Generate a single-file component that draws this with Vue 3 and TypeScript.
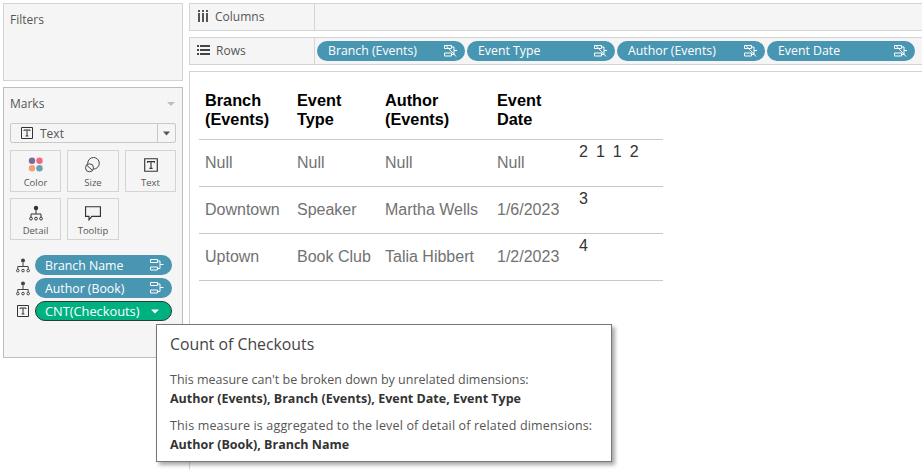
<script setup lang="ts">
const rowPills: string[] = ['Branch (Events)', 'Event Type', 'Author (Events)', 'Event Date']
const headers: string[][] = [['Branch', '(Events)'], ['Event', 'Type'], ['Author', '(Events)'], ['Event', 'Date']]
const rows = [
  { cells: ['Null', 'Null', 'Null', 'Null'], value: ['2', '1', '1', '2'] },
  { cells: ['Downtown', 'Speaker', 'Martha Wells', '1/6/2023'], value: ['3'] },
  { cells: ['Uptown', 'Book Club', 'Talia Hibbert', '1/2/2023'], value: ['4'] },
]
const markCards = ['Color', 'Size', 'Text', 'Detail', 'Tooltip']
</script>

<template>
  <div class="page">
    <aside class="side">
      <section class="filters"><h2 class="title">Filters</h2></section>
      <section class="marks">
        <header class="marks-head">
          <h2 class="title">Marks</h2>
          <svg class="caret" width="10" height="6" viewBox="0 0 10 6"><path d="M1 1h8L5 5z" fill="#bdbdbd" /></svg>
        </header>
        <div class="select">
          <div class="select-main">
            <svg class="t-icon" width="12" height="12" viewBox="0 0 12 12"><path d="M.5.5h11v11H.5z" fill="none" stroke="#333" /><path d="M3 4V3h6v1M6 3v6M4.600 9h2.800" fill="none" stroke="#333" /></svg>
            <span>Text</span>
          </div>
          <div class="select-arrow"><svg width="7" height="5" viewBox="0 0 7 5"><path d="M0 .5h7L3.500 4.500z" fill="#555" /></svg></div>
        </div>
        <div class="cards">
          <div v-for="c in markCards" :key="c" class="card">
            <svg v-if="c === 'Color'" width="20" height="16" viewBox="0 0 20 16">
              <circle cx="6" cy="3.800" r="3.200" fill="#7b6a9a" /><circle cx="13.500" cy="3.800" r="3.200" fill="#ef6a80" />
              <circle cx="6" cy="11.300" r="3.200" fill="#f2a273" /><circle cx="13.500" cy="11.300" r="3.200" fill="#6c9fb0" />
            </svg>
            <svg v-else-if="c === 'Size'" width="20" height="16" viewBox="0 0 20 16" fill="none" stroke="#444">
              <circle cx="10.500" cy="6.300" r="5.800" /><circle cx="6.500" cy="10.800" r="4" fill="#f5f5f5" /><path d="M4 8.500l5 4.500" />
            </svg>
            <svg v-else-if="c === 'Text'" width="20" height="16" viewBox="0 0 14 14" class="box14">
              <path d="M1.500 1.500h11v11h-11z" fill="none" stroke="#333" /><path d="M4 5V4h6v1M7 4v6M5.600 10h2.800" fill="none" stroke="#333" />
            </svg>
            <svg v-else-if="c === 'Detail'" width="20" height="16" viewBox="0 0 14 16">
              <circle cx="7" cy="3" r="2.200" fill="#333" /><path d="M7 5v4M2 12V9h10v3" fill="none" stroke="#333" />
              <circle cx="2" cy="13.600" r="1.400" fill="none" stroke="#333" /><circle cx="7" cy="13.600" r="1.400" fill="none" stroke="#333" /><circle cx="12" cy="13.600" r="1.400" fill="none" stroke="#333" />
            </svg>
            <svg v-else width="20" height="16" viewBox="0 0 16 14">
              <path d="M1.500 1.500h13v8.500H7L4.500 13V10h-3z" fill="none" stroke="#333" />
            </svg>
            <span>{{ c }}</span>
          </div>
        </div>
        <div class="mark-rows">
          <div class="mark-row">
            <svg class="mark-icon" width="14" height="15" viewBox="0 0 14 15"><circle cx="7" cy="2.400" r="2" fill="#444" /><path d="M7 4.500v4M1.800 11V8.500h10.400V11" fill="none" stroke="#444" /><circle cx="1.800" cy="12.600" r="1.300" fill="none" stroke="#444" /><circle cx="7" cy="12.600" r="1.300" fill="none" stroke="#444" /><circle cx="12.200" cy="12.600" r="1.300" fill="none" stroke="#444" /></svg>
            <div class="pill blue wide"><span>Branch Name</span>
              <svg width="14" height="12" viewBox="0 0 14 12" fill="none" stroke="#fff"><path d="M.5.500h7v3h-7zM.5 8h7v3h-7zM7.500 2h2.500v7.500H7.500M10 5.500h3.500" /></svg>
            </div>
          </div>
          <div class="mark-row">
            <svg class="mark-icon" width="14" height="15" viewBox="0 0 14 15"><circle cx="7" cy="2.400" r="2" fill="#444" /><path d="M7 4.500v4M1.800 11V8.500h10.400V11" fill="none" stroke="#444" /><circle cx="1.800" cy="12.600" r="1.300" fill="none" stroke="#444" /><circle cx="7" cy="12.600" r="1.300" fill="none" stroke="#444" /><circle cx="12.200" cy="12.600" r="1.300" fill="none" stroke="#444" /></svg>
            <div class="pill blue wide"><span>Author (Book)</span>
              <svg width="14" height="12" viewBox="0 0 14 12" fill="none" stroke="#fff"><path d="M.5.500h7v3h-7zM.5 8h7v3h-7zM7.500 2h2.500v7.500H7.500M10 5.500h3.500" /></svg>
            </div>
          </div>
          <div class="mark-row">
            <svg class="mark-icon" width="14" height="14" viewBox="0 0 14 14"><path d="M1.500 1.500h11v11h-11z" fill="none" stroke="#333" /><path d="M4 5V4h6v1M7 4v6M5.600 10h2.800" fill="none" stroke="#333" /></svg>
            <div class="pill green wide"><span>CNT(Checkouts)</span>
              <svg class="pill-caret" width="8" height="5" viewBox="0 0 8 5"><path d="M0 .5h8L4 4.500z" fill="#fff" /></svg>
            </div>
          </div>
        </div>
      </section>
    </aside>

    <main class="main">
      <div class="shelf">
        <div class="shelf-label">
          <svg width="12" height="12" viewBox="0 0 12 12" fill="#555"><rect x="1" y="3" width="2" height="9" /><rect x="5" y="3" width="2" height="9" /><rect x="9" y="3" width="2" height="9" /><rect x="1" y="0" width="2" height="2" /><rect x="5" y="0" width="2" height="2" /><rect x="9" y="0" width="2" height="2" /></svg>
          <span>Columns</span>
        </div>
        <div class="shelf-body"></div>
      </div>
      <div class="shelf">
        <div class="shelf-label">
          <svg width="13" height="10" viewBox="0 0 13 10" fill="#444"><rect x="0" y="0" width="2" height="2" /><rect x="3" y="0" width="10" height="2" /><rect x="0" y="4" width="2" height="2" /><rect x="3" y="4" width="10" height="2" /><rect x="0" y="8" width="2" height="2" /><rect x="3" y="8" width="10" height="2" /></svg>
          <span>Rows</span>
        </div>
        <div class="shelf-body pills">
          <div v-for="p in rowPills" :key="p" class="pill blue">
            <span>{{ p }}</span>
            <svg width="13" height="12" viewBox="0 0 13 12" fill="none" stroke="#fff"><path d="M.5.500h7v3h-7zM.5 8h7v3h-7zM7.500 2h2.500v7.500H7.500M10 5.500h3M1.500 0l10.500 11.500" /></svg>
          </div>
        </div>
      </div>
      <div class="view">
        <div class="table">
          <div class="tr head">
            <div v-for="(h, i) in headers" :key="i" class="th">{{ h[0] }}<br />{{ h[1] }}</div>
            <div class="th"></div>
          </div>
          <div v-for="(r, i) in rows" :key="i" class="tr">
            <div v-for="(c, j) in r.cells" :key="j" class="td">{{ c }}</div>
            <div class="num"><span v-for="(v, k) in r.value" :key="k">{{ v }}</span></div>
          </div>
        </div>
      </div>
    </main>

    <div class="tooltip">
      <h3>Count of Checkouts</h3>
      <p>This measure can't be broken down by unrelated dimensions:<br /><b>Author (Events), Branch (Events), Event Date, Event Type</b></p>
      <p><span class="wider">This measure is aggregated to the level of detail of related dimensions:</span><br /><b>Author (Book), Branch Name</b></p>
    </div>
  </div>
</template>

<style>
html, body { margin: 0; background: #fff; }
</style>

<style scoped>
.page {
  position: relative;
  width: 922px;
  height: 470px;
  overflow: hidden;
  display: flex;
  gap: 6px;
  padding: 3px 0 0 3px;
  box-sizing: border-box;
  background: #fff;
  font-family: "Open Sans", "Noto Sans", sans-serif;
  color: #555;
}
.side { width: 180px; display: flex; flex-direction: column; gap: 6px; flex: none; }
.filters {
  height: 78px; box-sizing: border-box; border: 1px solid #d4d4d4; background: #f5f5f5; padding: 9px 6px;
}
.title { margin: 0; font-size: 12px; line-height: 14px; font-weight: 400; color: #555; }
.marks {
  height: 271px; box-sizing: border-box; border: 1px solid #bdbdbd; background: #f5f5f5; padding: 8px 6px;
}
.marks-head { display: flex; justify-content: space-between; align-items: center; height: 16px; }
.select {
  margin-top: 11px; height: 20px; box-sizing: border-box; border: 1px solid #c8c8c8;
  border-radius: 2px; display: flex; width: 166px; font-size: 12px;
}
.select-main { flex: 1; display: flex; align-items: center; gap: 7px; padding-left: 10px; border-right: 1px solid #c8c8c8; }
.select-arrow { width: 17px; display: flex; align-items: center; justify-content: center; }
.cards { margin-top: 7px; display: grid; grid-template-columns: 51px 52px 51px; column-gap: 6px; row-gap: 6px; width: 166px; }
.card {
  height: 42px; box-sizing: border-box; border: 1px solid #d4d4d4; display: flex; flex-direction: column;
  align-items: center; padding-top: 6px; gap: 4px; font-size: 9.500px; line-height: 12px; color: #555;
}
.mark-rows { margin-top: 15px; display: flex; flex-direction: column; gap: 3px; }
.mark-row { display: flex; align-items: center; gap: 5px; padding-left: 6px; height: 20px; }
.mark-icon { flex: none; }
.pill {
  width: 148px; height: 20px; box-sizing: border-box; border-radius: 10px; display: flex; align-items: center;
  justify-content: space-between; padding: 0 8px 1px 11px; color: #fff; font-size: 12.300px; white-space: nowrap; flex: none;
}
.wide { width: 137px; padding: 0 8px 0 10px; }
.blue { background: #4996b2; }
.green { background: #00b180; border: 1px solid #2d3a3a; padding-left: 9px; font-size: 12.800px; }
.pill-caret { margin-right: 4px; }
.main { flex: 1; display: flex; flex-direction: column; gap: 6px; min-width: 0; }
.shelf {
  height: 28px; box-sizing: border-box; border: 1px solid #d4d4d4; border-right: none; background: #f5f5f5; display: flex;
}
.shelf-label {
  width: 125px; flex: none; box-sizing: border-box; border-right: 1px solid #d4d4d4; display: flex; align-items: center;
  gap: 6px; padding: 0 0 2px 7px; font-size: 12px; color: #555;
}
.shelf-body { flex: 1; }
.pills { display: flex; align-items: center; gap: 2px; padding-left: 2px; }
.view { flex: 1; border-top: 1px solid #d4d4d4; border-left: 1px solid #d4d4d4; background: #fff; padding: 19px 0 0 9px; }
.table { width: 464px; font-family: "Liberation Sans", Arial, sans-serif; }
.tr { display: grid; grid-template-columns: 92px 88px 112px 82px 90px; height: 47px; border-bottom: 1px solid #c8c8c8; box-sizing: border-box; padding-left: 6px; }
.head { height: 49px; }
.th { font-weight: 700; font-size: 16.300px; line-height: 19px; color: #000; }
.td { font-size: 16px; line-height: 46px; color: #727272; white-space: nowrap; }
.num { font-size: 16px; line-height: 18px; color: #333; padding-top: 3px; display: flex; gap: 8px; }
.tooltip {
  position: absolute; left: 156px; top: 324px; width: 456px; height: 138px; box-sizing: border-box;
  background: #fff; border: 1px solid #777; box-shadow: 3px 3px 4px rgba(0,0,0,.35); padding: 9px 13px; color: #333;
}
.tooltip h3 { margin: 0 0 16px; font-size: 15.800px; line-height: 20px; font-weight: 400; color: #444; }
.tooltip p { margin: 0 0 7px; font-size: 12.500px; line-height: 19px; color: #555; }
.tooltip p + p { margin-top: 8px; }
.wider { letter-spacing: .16px; }
.tooltip b { color: #333; font-weight: 700; }
</style>
